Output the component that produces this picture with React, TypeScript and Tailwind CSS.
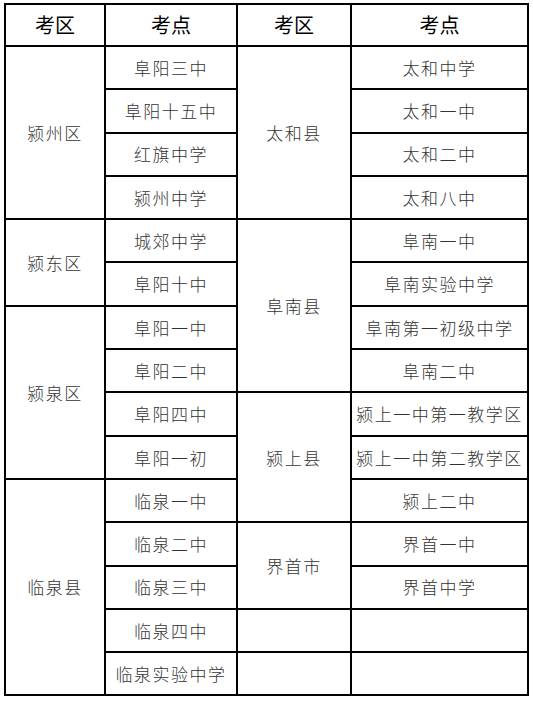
import React from "react";

const col1: [string, number][] = [
  ["颍州区", 4],
  ["颍东区", 2],
  ["颍泉区", 4],
  ["临泉县", 5],
];
const col2 = [
  "阜阳三中",
  "阜阳十五中",
  "红旗中学",
  "颍州中学",
  "城郊中学",
  "阜阳十中",
  "阜阳一中",
  "阜阳二中",
  "阜阳四中",
  "阜阳一初",
  "临泉一中",
  "临泉二中",
  "临泉三中",
  "临泉四中",
  "临泉实验中学",
];
const col3: [string, number][] = [
  ["太和县", 4],
  ["阜南县", 4],
  ["颍上县", 3],
  ["界首市", 2],
  ["", 1],
  ["", 1],
];
const col4 = [
  "太和中学",
  "太和一中",
  "太和二中",
  "太和八中",
  "阜南一中",
  "阜南实验中学",
  "阜南第一初级中学",
  "阜南二中",
  "颍上一中第一教学区",
  "颍上一中第二教学区",
  "颍上二中",
  "界首一中",
  "界首中学",
  "",
  "",
];

function starts(spans: [string, number][]) {
  const m: Record<number, [string, number]> = {};
  let r = 0;
  for (const s of spans) {
    m[r] = s;
    r += s[1];
  }
  return m;
}

export default function App() {
  const s1 = starts(col1);
  const s3 = starts(col3);
  const td =
    "border-2 border-black text-center align-middle p-0 text-[17px] tracking-[1.5px] text-[#333] font-light";
  return (
    <div
      className="w-[533px] h-[701px] bg-white pt-[3px] pl-[4px]"
      style={{ fontFamily: '"Noto Sans CJK SC", "Noto Sans", sans-serif' }}
    >
      <table className="border-collapse table-fixed w-[523px]">
        <colgroup>
          <col className="w-[100px]" />
          <col className="w-[132px]" />
          <col className="w-[114px]" />
          <col className="w-[177px]" />
        </colgroup>
        <tbody>
          <tr className="h-[42px]">
            {["考区", "考点", "考区", "考点"].map((h, i) => (
              <th
                key={i}
                className="border-2 border-black text-center align-middle p-0 text-[20px] font-normal text-black"
              >
                {h}
              </th>
            ))}
          </tr>
          {col2.map((c2, r) => (
            <tr key={r} className="h-[43.3px]">
              {s1[r] && (
                <td rowSpan={s1[r][1]} className={td}>
                  {s1[r][0]}
                </td>
              )}
              <td className={td}>{c2}</td>
              {s3[r] && (
                <td rowSpan={s3[r][1]} className={td}>
                  {s3[r][0]}
                </td>
              )}
              <td className={td + " whitespace-nowrap"}>{col4[r]}</td>
            </tr>
          ))}
        </tbody>
      </table>
    </div>
  );
}
